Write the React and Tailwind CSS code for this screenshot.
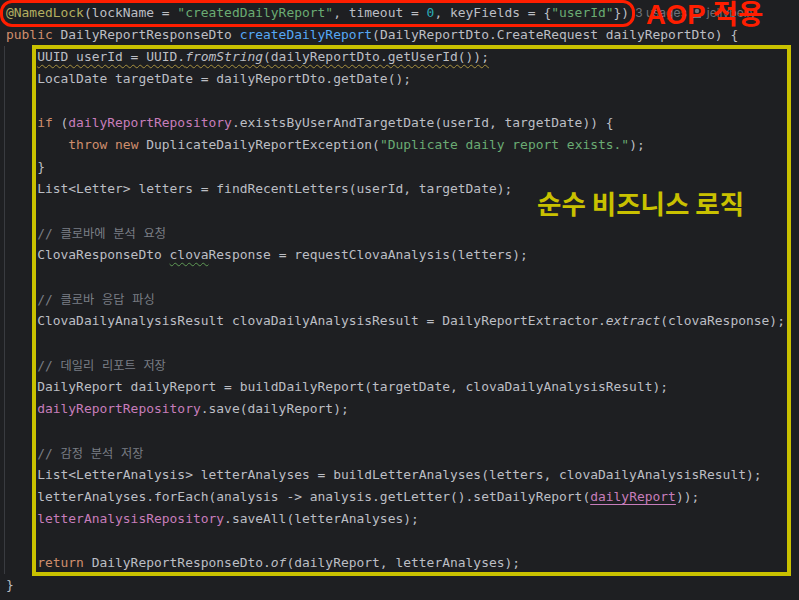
import React from 'react';

const K = ({ children }) => <span className="text-[#cf8e6d]">{children}</span>;
const S = ({ children }) => <span className="text-[#6aab73]">{children}</span>;
const F = ({ children }) => <span className="text-[#c77dbb]">{children}</span>;
const I = ({ children }) => <span className="italic">{children}</span>;

// korean words in a wider fallback, spaces stay monospace
const Comment = ({ words }) => (
  <span className="text-[#7a7e85]">
    {'//'}
    {words.map((w) => (
      <React.Fragment key={w}>
        {' '}
        <span className="text-[12.2px] [font-family:'Noto_Sans_CJK_KR',sans-serif]">{w}</span>
      </React.Fragment>
    ))}
  </span>
);

const Line = ({ children }) => (
  <div className="h-[22px] leading-[22px] whitespace-pre">{children || ' '}</div>
);

const App = () => {
  return (
    <div className="relative w-full h-[600px] overflow-hidden bg-[#1e1f22] text-[#bcbec4] text-[12.95px] [font-family:'DejaVu_Sans_Mono','Noto_Sans_CJK_KR',monospace]">
      <div className="pl-[6px] pt-[2px]">
        <Line>
          <span className="text-[#b3ae60]">@NamedLock</span>
          {'(lockName = '}
          <S>"createdDailyReport"</S>
          {', timeout = '}
          <span className="text-[#2aacb8]">0</span>
          {', keyFields = {'}
          <S>"userId"</S>
          {'})'}
          <span className="ml-[6px] text-[12px] text-[#6f737a] [font-family:'Inter',sans-serif]">
            3 usages
            <svg className="inline-block mx-[5px] -mt-[2px]" width="10" height="10" viewBox="0 0 10 10" fill="#6f737a">
              <circle cx="5" cy="3" r="2.2" />
              <path d="M1 10c0-2.6 1.8-4 4-4s4 1.4 4 4z" />
            </svg>
            jellybelly
          </span>
        </Line>
        <Line>
          <K>public</K>
          {' DailyReportResponseDto '}
          <span className="text-[#56a8f5]">createDailyReport</span>
          {'(DailyReportDto.CreateRequest dailyReportDto) {'}
        </Line>

        {/* method body with indent guide */}
        <div className="-ml-[2px] pl-[1px] border-l border-[#393b40]">
          <Line>
            {'    '}
            <span className="underline decoration-wavy decoration-[#a8913f] underline-offset-[3px] decoration-1">
              UUID userId = UUID.<I>fromString</I>(dailyReportDto.getUserId());
            </span>
          </Line>
          <Line>{'    LocalDate targetDate = dailyReportDto.getDate();'}</Line>
          <Line />
          <Line>
            {'    '}<K>if</K>{' ('}<F>dailyReportRepository</F>{'.existsByUserAndTargetDate(userId, targetDate)) {'}
          </Line>
          <Line>
            {'        '}<K>throw</K>{' '}<K>new</K>{' DuplicateDailyReportException('}
            <S>"Duplicate daily report exists."</S>{');'}
          </Line>
          <Line>{'    }'}</Line>
          <Line>{'    List<Letter> letters = findRecentLetters(userId, targetDate);'}</Line>
          <Line />
          <Line>{'    '}<Comment words={['클로바에', '분석', '요청']} /></Line>
          <Line>
            {'    ClovaResponseDto '}
            <span className="underline decoration-wavy decoration-[#5f9a55] underline-offset-[3px] decoration-1">clova</span>
            {'Response = requestClovaAnalysis(letters);'}
          </Line>
          <Line />
          <Line>{'    '}<Comment words={['클로바', '응답', '파싱']} /></Line>
          <Line>
            {'    ClovaDailyAnalysisResult clovaDailyAnalysisResult = DailyReportExtractor.'}
            <I>extract</I>{'(clovaResponse);'}
          </Line>
          <Line />
          <Line>{'    '}<Comment words={['데일리', '리포트', '저장']} /></Line>
          <Line>{'    DailyReport dailyReport = buildDailyReport(targetDate, clovaDailyAnalysisResult);'}</Line>
          <Line>{'    '}<F>dailyReportRepository</F>{'.save(dailyReport);'}</Line>
          <Line />
          <Line>{'    '}<Comment words={['감정', '분석', '저장']} /></Line>
          <Line>{'    List<LetterAnalysis> letterAnalyses = buildLetterAnalyses(letters, clovaDailyAnalysisResult);'}</Line>
          <Line>
            {'    letterAnalyses.forEach(analysis -> analysis.getLetter().setDailyReport('}
            <span className="text-[#c77dbb] underline underline-offset-[3px]">dailyReport</span>
            {'));'}
          </Line>
          <Line>{'    '}<F>letterAnalysisRepository</F>{'.saveAll(letterAnalyses);'}</Line>
          <Line />
          <Line>
            {'    '}<K>return</K>{' DailyReportResponseDto.'}<I>of</I>{'(dailyReport, letterAnalyses);'}
          </Line>
        </div>
        <Line>{'}'}</Line>
      </div>

      {/* annotation overlays */}
      <div className="absolute left-0 top-0 w-[635px] h-[27px] border-[3px] border-[#ff1e00] rounded-[12px]" />
      <div className="absolute left-[646px] top-[1px] text-[27.5px] leading-[27px] font-bold text-[#ff1e00] [font-family:'Liberation_Sans','Noto_Sans_CJK_KR',sans-serif] whitespace-nowrap">
        AOP 적용
      </div>
      <div className="absolute left-[32px] top-[45px] w-[759px] h-[531px] border-4 border-[#c9c100]" />
      <div className="absolute left-[537px] top-[186px] text-[26.5px] leading-[34px] font-bold text-[#c9c100] [font-family:'Noto_Sans_CJK_KR',sans-serif] whitespace-nowrap">
        순수 비즈니스 로직
      </div>
    </div>
  );
};

export default App;
